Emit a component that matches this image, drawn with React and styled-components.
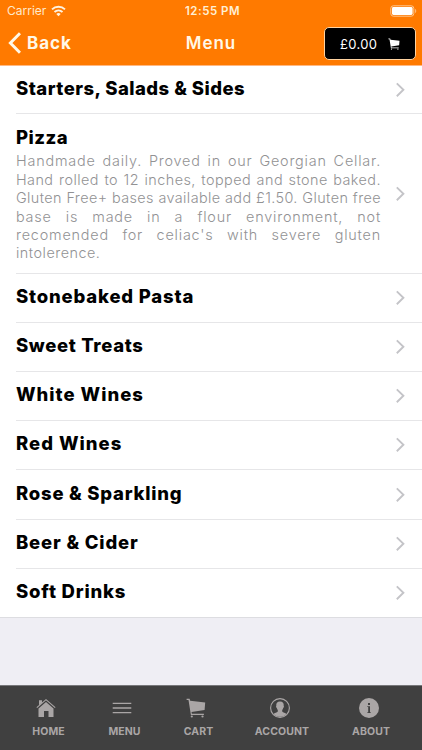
import React from "react";
import styled, { createGlobalStyle } from "styled-components";

const Global = createGlobalStyle`
  * { box-sizing: border-box; }
  body { margin: 0; font-family: Inter, "Open Sans", sans-serif; -webkit-font-smoothing: antialiased; }
`;

const Screen = styled.div`
  width: 422px; height: 750px; overflow: hidden;
  display: flex; flex-direction: column;
  background: #efeef4;
`;
const Header = styled.header`
  height: 66px; flex: none; background: #ff7a00; color: #fff8e8;
  border-bottom: 1px solid #ffb882;
`;
const StatusBar = styled.div`
  height: 22px; padding: 0 5px 0 7px;
  display: grid; grid-template-columns: 1fr auto 1fr; align-items: center;
  font-size: 12px; line-height: 22px;
`;
const Carrier = styled.div`
  display: flex; align-items: center; gap: 5px; letter-spacing: 0; font-weight: 400; color: #ffe9cc;
`;
const Time = styled.div`
  font-weight: 600; font-size: 11.5px; letter-spacing: 0.5px; color: #ffefd5; padding-left: 1px;
`;
const BatteryBox = styled.div`
  display: flex; justify-content: flex-end;
`;
const NavBar = styled.div`
  height: 43px; padding: 0 6px 0 8px;
  display: grid; grid-template-columns: 1fr auto 1fr; align-items: center;
`;
const Back = styled.div`
  display: flex; align-items: center; gap: 6px;
  font-size: 17px; line-height: 20px; font-weight: 700; letter-spacing: 1px;
  padding-bottom: 2px;
`;
const PageTitle = styled.div`
  font-size: 17px; line-height: 20px; font-weight: 600; letter-spacing: 1px;
  padding: 0 2px 2px 0;
`;
const CartButton = styled.div`
  justify-self: end; width: 92px; height: 33px; background: #000;
  border: 1.5px solid #ffd3a0; border-radius: 5px; color: #fff;
  display: flex; align-items: center; padding-left: 15px; gap: 11px;
  font-size: 13px; font-weight: 400; letter-spacing: 0.3px;
`;
const List = styled.main`
  background: #fff; flex: none; border-bottom: 1px solid #dddde1;
`;
const Row = styled.div`
  height: ${(p) => p.$height}px; margin-left: 16px; padding-right: 16px;
  display: flex; align-items: center; justify-content: space-between;
  & + & { border-top: 1px solid #e6e6e8; }
`;
const Content = styled.div`
  width: 365px; padding-bottom: ${(p) => (p.$tall ? 0 : 4)}px;
`;
const Title = styled.div`
  font-size: 18.5px; line-height: 26px; font-weight: 800; color: #000; white-space: nowrap;
  letter-spacing: ${(p) => p.$track}px;
`;
const Description = styled.div`
  padding-top: 2px;
  color: #929294; font-size: 14.4px; line-height: 18.4px; font-weight: 300;
`;
const Line = styled.div`
  white-space: nowrap; letter-spacing: ${(p) => p.$track}px; word-spacing: -2px;
  text-align-last: ${(p) => (p.$last ? "left" : "justify")};
`;
const TabBar = styled.nav`
  margin-top: auto; height: 65px; flex: none; background: #404040; color: #aaa6a6;
  border-top: 1px solid #77777a; padding: 0 9px 0 10px;
  display: grid; grid-template-columns: 77px 75px 73px 94px 84px;
`;
const Tab = styled.div`
  display: flex; flex-direction: column; align-items: center; padding-top: 12px; gap: 7px;
  font-size: 10.5px; line-height: 14px; font-weight: 700; letter-spacing: 0.1px;
  svg { display: block; margin-right: 5px; }
`;

const Wifi = () => (
  <svg width="15" height="12" viewBox="0 0 15 12" fill="none" stroke="#fff3e0" strokeWidth="1.9">
    <path d="M1 4.4C4.6 .9 10.4 .9 14 4.4" />
    <path d="M3.5 7C5.8 4.9 9.2 4.9 11.5 7" />
    <path d="M7.5 11.3 5.3 8.9C6.5 7.8 8.5 7.8 9.7 8.9Z" fill="#fff3e0" stroke="none" />
  </svg>
);
const Battery = () => (
  <svg width="27" height="12" viewBox="0 0 27 12">
    <rect x=".8" y=".8" width="23" height="10.4" rx="2.6" fill="none" stroke="#ffc68d" />
    <rect x="2" y="2" width="20.6" height="8" rx="1.4" fill="#fff" />
    <path d="M25.2 4c1.3.3 1.3 3.7 0 4z" fill="#ffc68d" />
  </svg>
);
const BackChevron = () => (
  <svg width="13" height="22" viewBox="0 0 13 22" fill="none" stroke="#fff8e8" strokeWidth="3">
    <path d="M12 1.2 2.4 11 12 20.8" />
  </svg>
);
const Chevron = () => (
  <svg width="10" height="16" viewBox="0 0 10 16" fill="none" stroke="#c4c4c8" strokeWidth="1.9">
    <path d="M.8 1.400 7.400 7.800.8 14.200" />
  </svg>
);
const Cart = ({ size }) => (
  <svg width={size} height={size} viewBox="0 0 20 20" fill="currentColor">
    <path d="M.6.8h3l.6 2 15 1.700-.6 7.500-13.100 2 .4 1.800h12v1.100H4.900L2.500 2H.6z" />
    <circle cx="5.800" cy="18.500" r="1.100" />
    <circle cx="16.500" cy="18.500" r="1.100" />
  </svg>
);
const Home = () => (
  <svg width="20" height="20" viewBox="0 0 20 20" fill="currentColor">
    <path d="M3 2.200h3v2.600L3 7.500z" />
    <path d="M10 3.900 17.500 10.400V19H12.500v-6h-4.500v6H2.500v-8.600z" />
    <path d="M.8 9.700 10 1.700l9.200 8" fill="none" stroke="currentColor" strokeWidth="1.100" />
  </svg>
);
const Menu = () => (
  <svg width="20" height="20" viewBox="0 0 20 20" stroke="currentColor" strokeWidth="1.300">
    <path d="M.7 5.300h18.600M.7 10h18.600M.7 14.700h18.600" />
  </svg>
);
const Account = () => (
  <svg width="20" height="20" viewBox="0 0 20 20">
    <circle cx="10" cy="10" r="9.400" fill="none" stroke="currentColor" strokeWidth="1.100" />
    <path fill="currentColor" d="M10 3.500c2.800 0 4 1.800 3.700 4.300.5.600.2 1.900-.5 2.200-.2 1-.6 1.600-1 2v1.500c.8 1.300 3.300 1.300 4.300 2.500-1.600 1.700-3.800 2.700-6.500 2.700S5.100 17.700 3.500 16c1-1.200 3.500-1.200 4.300-2.500V12c-.4-.4-.8-1-1-2-.7-.3-1-1.600-.5-2.200C6 5.300 7.200 3.500 10 3.500z" />
  </svg>
);
const Info = () => (
  <svg width="20" height="20" viewBox="0 0 20 20">
    <circle cx="10" cy="10" r="10" fill="currentColor" />
    <path fill="#404040" d="M9 5h2v1.900H9zM8.300 8.300H11v5.900h.8v.8H8.300v-.8h.9V9.100h-.9z" />
  </svg>
);

const items = [
  { title: "Starters, Salads & Sides", height: 47, track: 0.47 },
  {
    title: "Pizza", height: 160, track: 0.5,
    lines: [
      ["Handmade daily. Proved in our Georgian Cellar.", 0.8],
      ["Hand rolled to 12 inches, topped and stone baked.", 0.45],
      ["Gluten Free+ bases available add £1.50. Gluten free", 0.4],
      ["base is made in a flour environment, not", 0.8],
      ["recomended for celiac's with severe gluten", 0.8],
      ["intolerence.", 0.5],
    ],
  },
  { title: "Stonebaked Pasta", height: 49, track: 0.82 },
  { title: "Sweet Treats", height: 49, track: 0.65 },
  { title: "White Wines", height: 49, track: 1 },
  { title: "Red Wines", height: 49, track: 1 },
  { title: "Rose & Sparkling", height: 50, track: 0.77 },
  { title: "Beer & Cider", height: 49, track: 0.82 },
  { title: "Soft Drinks", height: 49, track: 0.8 },
];
const tabs = [
  { label: "HOME", icon: <Home /> },
  { label: "MENU", icon: <Menu /> },
  { label: "CART", icon: <Cart size={20} /> },
  { label: "ACCOUNT", icon: <Account /> },
  { label: "ABOUT", icon: <Info /> },
];

export default function App() {
  return (
    <Screen>
      <Global />
      <Header>
        <StatusBar>
          <Carrier>Carrier <Wifi /></Carrier>
          <Time>12:55 PM</Time>
          <BatteryBox><Battery /></BatteryBox>
        </StatusBar>
        <NavBar>
          <Back><BackChevron />Back</Back>
          <PageTitle>Menu</PageTitle>
          <CartButton>£0.00<Cart size={12} /></CartButton>
        </NavBar>
      </Header>
      <List>
        {items.map((item) => (
          <Row key={item.title} $height={item.height}>
            <Content $tall={!!item.lines}>
              <Title $track={item.track}>{item.title}</Title>
              {item.lines && (
                <Description>
                  {item.lines.map(([text, track], i) => (
                    <Line key={text} $track={track} $last={i === item.lines.length - 1}>{text}</Line>
                  ))}
                </Description>
              )}
            </Content>
            <Chevron />
          </Row>
        ))}
      </List>
      <TabBar>
        {tabs.map((tab) => (
          <Tab key={tab.label}>{tab.icon}{tab.label}</Tab>
        ))}
      </TabBar>
    </Screen>
  );
}
